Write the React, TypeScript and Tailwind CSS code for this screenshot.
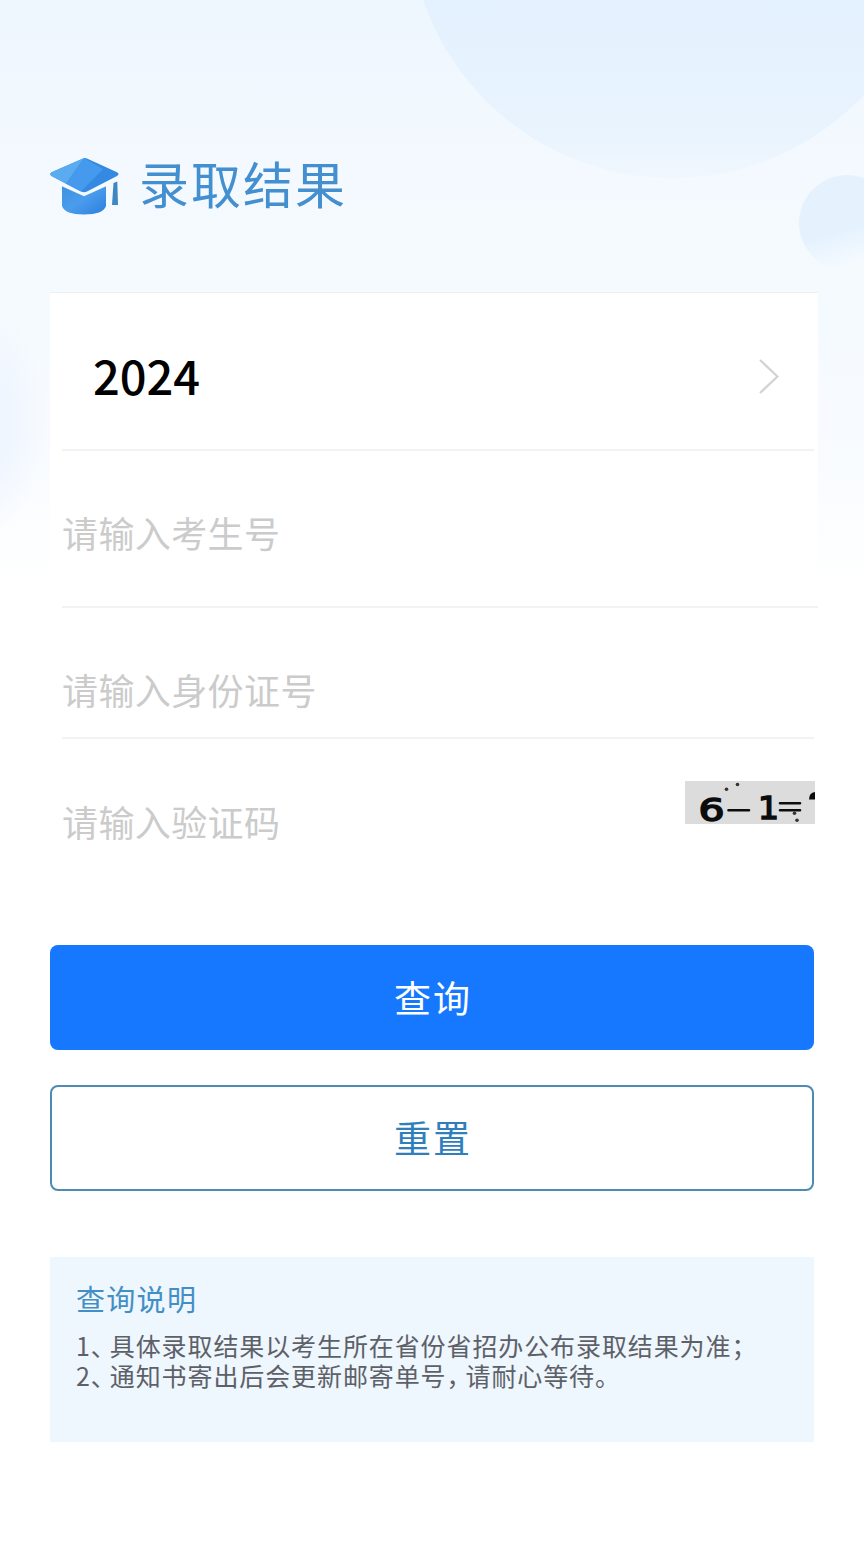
interface FieldProps {
  placeholder: string;
  className: string;
}

function Field({ placeholder, className }: FieldProps) {
  return (
    <input
      type="text"
      placeholder={placeholder}
      className={`w-full bg-transparent text-[36px] tracking-[0.4px] text-gray-700 outline-none placeholder:text-[#cbcbcb] ${className}`}
    />
  );
}

function CapIcon() {
  return (
    <svg width="70" height="58" viewBox="0 0 70 58" className="shrink-0">
      <defs>
        <linearGradient id="cap" x1="0" y1="0" x2="1" y2="1">
          <stop offset="0" stopColor="#3f8fe0" />
          <stop offset="0.5" stopColor="#4a9cec" />
          <stop offset="1" stopColor="#2b7fdd" />
        </linearGradient>
      </defs>
      <path d="M12 26 L34 38 L56 26 V49 Q53 57.5 34 57.5 Q15 57.5 12 49 Z" fill="url(#cap)" />
      <path d="M6 24.5 L34 37 L62 24.5" fill="none" stroke="#f5faff" strokeWidth="4" />
      <path d="M32.5 1.8 Q35 0.4 37.5 1.8 L67 15.2 Q70 17 67 19 L37 34.6 Q34 36 31 34.6 L1.5 19 Q-1 17 1.5 15.2 Z" fill="#3489e2" />
      <path d="M34 1.1 L32.5 1.8 L1.5 15.2 Q-1 17 1.5 19 L16 26.7 Z" fill="#5aabef" />
      <path d="M34 1.1 L16 26.7 L31 34.6 L53 12 Z" fill="#459aee" />
      <path d="M63.5 26 L67.3 24.5 L68 48 H62 Z" fill="#3f86c2" />
    </svg>
  );
}

function Captcha() {
  return (
    <svg width="130" height="43" viewBox="0 0 130 43" className="shrink-0">
      <rect width="130" height="43" fill="#dcdcdc" />
      <g fill="#0c0c0c" stroke="#0c0c0c" strokeWidth="1.6" fontFamily="'DejaVu Sans', sans-serif" fontSize="32">
        <text x="13.5" y="39.5" textLength="26" lengthAdjust="spacingAndGlyphs">6</text>
        <text x="73" y="37.5" textLength="21" lengthAdjust="spacingAndGlyphs">1</text>
      </g>
      <path d="M43.5 29.3 H64 M95 22.3 H115 M95 29.3 H115" stroke="#0c0c0c" strokeWidth="2.6" strokeLinecap="round" />
      <path d="M124 18.5 Q124 11.5 130 11 V18.5 Z" fill="#0c0c0c" />
      <g fill="#333">
        <circle cx="41.5" cy="8.2" r="1.8" />
        <circle cx="52.5" cy="3.5" r="1.8" />
        <circle cx="109.5" cy="32.3" r="1.8" />
        <circle cx="112" cy="39.3" r="1.8" />
      </g>
    </svg>
  );
}

function Backdrop() {
  return (
    <svg width="864" height="620" viewBox="0 0 864 620" className="absolute left-0 top-0">
      <defs>
        <linearGradient id="sky" x1="0" y1="0" x2="0" y2="1">
          <stop offset="0" stopColor="#eef6fe" />
          <stop offset="0.25" stopColor="#f3f9fe" />
          <stop offset="0.7" stopColor="#f7fbff" />
          <stop offset="0.95" stopColor="#ffffff" />
        </linearGradient>
        <linearGradient id="big" gradientUnits="userSpaceOnUse" x1="0" y1="0" x2="0" y2="178">
          <stop offset="0" stopColor="#e4f1fe" />
          <stop offset="0.7" stopColor="#e8f3fe" />
          <stop offset="1" stopColor="#f0f7fe" />
        </linearGradient>
        <linearGradient id="small" x1="0.2" y1="0" x2="0.5" y2="1">
          <stop offset="0" stopColor="#e5f2fe" />
          <stop offset="0.6" stopColor="#e5f2fe" />
          <stop offset="0.95" stopColor="#f5faff" />
        </linearGradient>
        <radialGradient id="left">
          <stop offset="0.4" stopColor="#f0f6ff" />
          <stop offset="1" stopColor="#f0f6ff" stopOpacity="0" />
        </radialGradient>
      </defs>
      <rect width="864" height="620" fill="url(#sky)" />
      <circle cx="672" cy="-85" r="263" fill="url(#big)" />
      <circle cx="847" cy="223" r="48" fill="url(#small)" />
      <ellipse cx="-12" cy="420" rx="58" ry="115" fill="url(#left)" />
    </svg>
  );
}

export default function App() {
  return (
    <div className="relative h-[1565px] w-[864px] overflow-hidden bg-white font-['Noto_Sans_CJK_SC',sans-serif]">
      <Backdrop />
      <main className="relative px-[50px] pt-[157px]">
        <header className="flex h-[58px] items-center">
          <CapIcon />
          <h1 className="ml-[19px] pb-[8px] text-[50px] leading-[58px] tracking-[2px] text-[#438fcf]">录取结果</h1>
        </header>

        <form className="mt-[77px]">
          <div className="-mr-[4px] h-[316px] border-t border-[#e9eff2] bg-white pl-3">
            <button type="button" className="flex h-[158px] w-[752px] items-center justify-between border-b-2 border-[#f2f2f2] pl-[31px] pr-[35px] pt-[10px]">
              <span className="pb-[3px] text-[47px] font-medium leading-[60px] text-black">2024</span>
              <svg width="20" height="35" viewBox="0 0 20 35" fill="none" stroke="#d2d2d2" strokeWidth="2.2">
                <path d="M1 1 L18.5 17.5 L1 34" />
              </svg>
            </button>
            <div className="h-[157px] border-b-2 border-[#f2f2f2]">
              <Field placeholder="请输入考生号" className="h-[161px]" />
            </div>
          </div>
          <div className="ml-3 h-[131px] border-b-2 border-[#f2f2f2]">
            <Field placeholder="请输入身份证号" className="mt-[51px] h-[60px]" />
          </div>
          <div className="-mr-px ml-3 flex h-[206px] items-start">
            <Field placeholder="请输入验证码" className="mt-[52px] h-[60px] min-w-0 flex-1" />
            <div className="mt-[42px]">
              <Captcha />
            </div>
          </div>

          <button type="button" className="block h-[105px] w-full rounded-lg bg-[#1677ff] pl-[2px] text-[37px] tracking-[2px] text-white">
            查询
          </button>
          <button type="button" className="mt-[35px] block h-[106px] w-full rounded-lg border-2 border-[#4d8bb3] bg-white pl-[2px] text-[37px] tracking-[2px] text-[#2f7fbd]">
            重置
          </button>
        </form>

        <section className="mt-[66px] h-[185px] bg-[#eef6fe] pl-[26px] pt-[22px]">
          <h2 className="text-[29px] leading-[38px] tracking-[1.3px] text-[#438fc5]">查询说明</h2>
          <div className="mt-[13px] whitespace-nowrap text-[25px] leading-[30px] tracking-[0.9px] text-[#5d6167]">
            <p>1<span className="tracking-[-6px]">、</span>具体录取结果以考生所在省份省招办公布录取结果为准；</p>
            <p>2<span className="tracking-[-6px]">、</span>通知书寄出后会更新邮寄单号<span className="tracking-[-6px]">，</span>请耐心等待。</p>
          </div>
        </section>
      </main>
    </div>
  );
}
